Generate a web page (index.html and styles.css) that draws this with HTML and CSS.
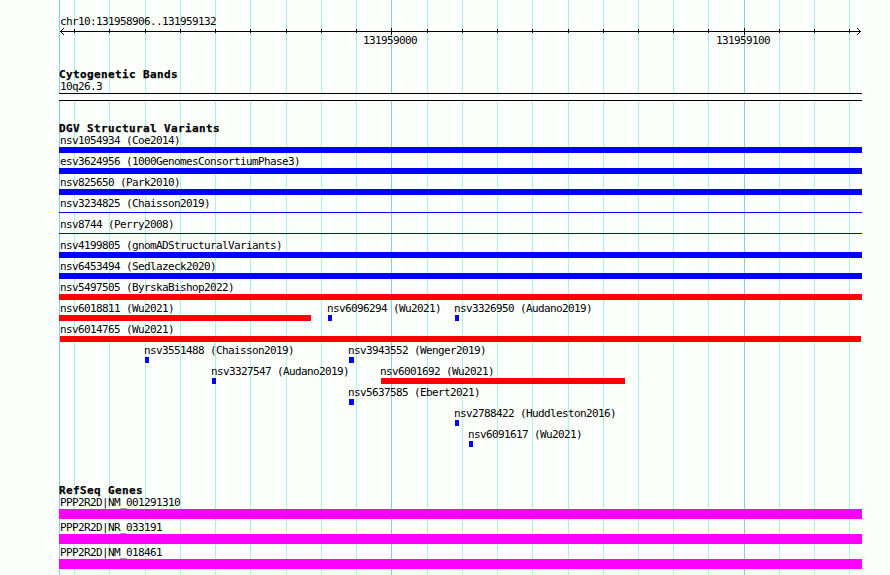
FILE: index.html
```
<!DOCTYPE html>
<html lang="en">
<head>
<meta charset="utf-8">
<title>chr10:131958906..131959132</title>
<link rel="stylesheet" href="styles.css">
</head>
<body>
<main class="browser">
  <svg class="gridlines" width="803" height="575" shape-rendering="crispEdges" aria-hidden="true">
    <path class="minor" d="M15.5 0V575M50.5 0V575M86.5 0V575M121.5 0V575M156.5 0V575M191.5 0V575M227.5 0V575M262.5 0V575M297.5 0V575M368.5 0V575M403.5 0V575M438.5 0V575M473.5 0V575M509.5 0V575M544.5 0V575M579.5 0V575M614.5 0V575M649.5 0V575M720.5 0V575M755.5 0V575M790.5 0V575"/>
    <path class="major" d="M.5 0V575M332.5 0V575M685.5 0V575"/>
  </svg>

  <section class="ruler">
    <div class="label">chr10:131958906..131959132</div>
    <svg class="axis" width="803" height="7" shape-rendering="crispEdges" aria-hidden="true">
      <path d="M1 3.5H802M15.5 1V5M50.5 1V5M86.5 1V5M121.5 1V5M156.5 1V5M191.5 1V5M227.5 1V5M262.5 1V5M297.5 1V5M332.5 0V7M368.5 1V5M403.5 1V5M438.5 1V5M473.5 1V5M509.5 1V5M544.5 1V5M579.5 1V5M614.5 1V5M649.5 1V5M685.5 0V7M720.5 1V5M755.5 1V5M790.5 1V5"/>
      <path d="M4 .5h1M3 1.5h1M2 2.5h1M2 4.5h1M3 5.5h1M4 6.5h1M798 .5h1M799 1.5h1M800 2.5h1M800 4.5h1M799 5.5h1M798 6.5h1"/>
    </svg>
    <div class="row">
      <div class="label" style="--x:303px">131959000</div>
      <div class="label" style="--x:656px">131959100</div>
    </div>
  </section>

  <section class="track cyto">
    <h2>Cytogenetic Bands</h2>
    <div class="label">10q26.3</div>
    <div class="band"></div>
  </section>

  <section class="track variants">
    <h2>DGV Structural Variants</h2>
    <div class="row"><div class="feature full gain"><div class="label">nsv1054934 (Coe2014)</div></div></div>
    <div class="row"><div class="feature full gain"><div class="label">esv3624956 (1000GenomesConsortiumPhase3)</div></div></div>
    <div class="row"><div class="feature full gain"><div class="label">nsv825650 (Park2010)</div></div></div>
    <div class="row"><div class="feature full thin"><div class="label">nsv3234825 (Chaisson2019)</div></div></div>
    <div class="row"><div class="feature full thin"><div class="label">nsv8744 (Perry2008)</div></div></div>
    <div class="row"><div class="feature full gain"><div class="label">nsv4199805 (gnomADStructuralVariants)</div></div></div>
    <div class="row"><div class="feature full gain"><div class="label">nsv6453494 (Sedlazeck2020)</div></div></div>
    <div class="row"><div class="feature full loss"><div class="label">nsv5497505 (ByrskaBishop2022)</div></div></div>
    <div class="row">
      <div class="feature edge loss" style="--x:0px;--w:252px"><div class="label">nsv6018811 (Wu2021)</div></div>
      <div class="feature gain" style="--x:269px;--w:4px"><div class="label">nsv6096294 (Wu2021)</div></div>
      <div class="feature gain" style="--x:396px;--w:4px"><div class="label">nsv3326950 (Audano2019)</div></div>
    </div>
    <div class="row"><div class="feature loss" style="--x:1px;--w:801px"><div class="label">nsv6014765 (Wu2021)</div></div></div>
    <div class="row">
      <div class="feature gain" style="--x:86px;--w:4px"><div class="label">nsv3551488 (Chaisson2019)</div></div>
      <div class="feature gain" style="--x:290px;--w:5px"><div class="label">nsv3943552 (Wenger2019)</div></div>
    </div>
    <div class="row">
      <div class="feature gain" style="--x:153px;--w:4px"><div class="label">nsv3327547 (Audano2019)</div></div>
      <div class="feature loss" style="--x:322px;--w:244px"><div class="label">nsv6001692 (Wu2021)</div></div>
    </div>
    <div class="row"><div class="feature gain" style="--x:290px;--w:5px"><div class="label">nsv5637585 (Ebert2021)</div></div></div>
    <div class="row"><div class="feature gain" style="--x:396px;--w:4px"><div class="label">nsv2788422 (Huddleston2016)</div></div></div>
    <div class="row"><div class="feature gain" style="--x:410px;--w:4px"><div class="label">nsv6091617 (Wu2021)</div></div></div>
  </section>

  <section class="track genes">
    <h2>RefSeq Genes</h2>
    <div class="row"><div class="feature full gene"><div class="label">PPP2R2D|NM_001291310</div></div></div>
    <div class="row"><div class="feature full gene"><div class="label">PPP2R2D|NR_033191</div></div></div>
    <div class="row"><div class="feature full gene"><div class="label">PPP2R2D|NM_018461</div></div></div>
  </section>
</main>
</body>
</html>
```

FILE: styles.css
```
* {
  box-sizing: border-box;
}

body {
  margin: 0;
  background: #fdfffd;
  color: #000;
  font-family: "DejaVu Sans Mono", monospace;
  font-size: 11px;
  letter-spacing: -0.622px;
  overflow: hidden;
}

.browser {
  position: relative;
  isolation: isolate;
  width: 803px;
  height: 575px;
  margin-left: 59px;
  padding-top: 16px;
}

.gridlines {
  position: absolute;
  inset: 0;
  z-index: -1;
}

.gridlines path {
  fill: none;
}

.minor {
  stroke: #afeeee;
}

.major {
  stroke: #87ceeb;
}

.label {
  height: 12px;
  padding-left: 1px;
  line-height: 11px;
  white-space: nowrap;
}

h2 {
  height: 13px;
  margin: 0;
  font-size: 11px;
  font-weight: bold;
  line-height: 14px;
  letter-spacing: 0.378px;
  -webkit-text-stroke: 0.25px #000;
  white-space: nowrap;
}

.row {
  display: grid;
  grid-template-columns: 100%;
}

.row > * {
  grid-area: 1 / 1;
}

.ruler {
  height: 52px;
}

.ruler .row .label {
  margin-left: var(--x);
}

.axis {
  display: block;
  stroke: #000;
  fill: none;
}

.cyto {
  height: 54px;
}

.band {
  height: 8px;
  border: solid #000;
  border-width: 1px 0;
  background: #fff;
}

.variants {
  height: 362px;
}

.variants .row {
  height: 21px;
}

.feature {
  width: var(--w);
  margin-left: var(--x);
}

.feature .label {
  margin-left: -2px;
}

.full {
  --x: 0px;
  --w: 803px;
}

.full .label,
.edge .label {
  margin-left: 0;
}

.feature[style*="--x:1px"] .label {
  margin-left: -1px;
}

.feature::after {
  content: "";
  display: block;
  height: 6px;
}

.gain::after {
  background: #00f;
}

.loss::after {
  background: #f00;
}

.thin::after {
  height: 1px;
  margin-top: 2px;
  background: #00f;
}

.genes .row {
  height: 25px;
}

.gene::after {
  height: 10px;
  background: #f0f;
}
```
